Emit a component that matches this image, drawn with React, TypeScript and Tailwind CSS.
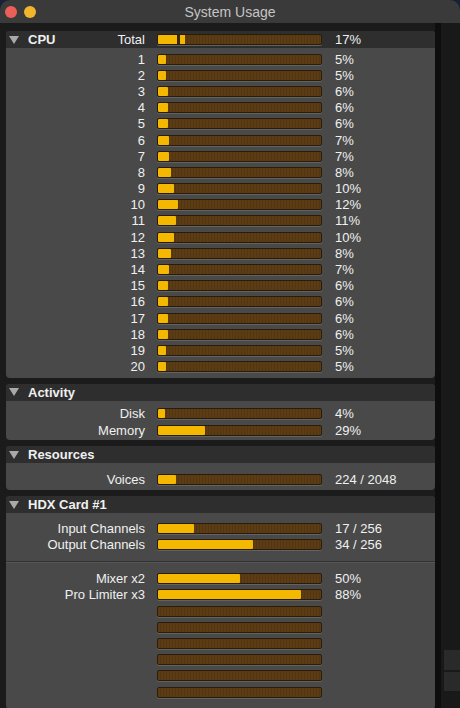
import React from "react";

const cpuRows = [5, 5, 6, 6, 6, 7, 7, 8, 10, 12, 11, 10, 8, 7, 6, 6, 6, 6, 5, 5];

function Meter({ pct, peak }: { pct?: number; peak?: boolean }) {
  return (
    <div className="relative w-[165px] h-[11px] rounded-[2px] border border-[#2a1c0a] bg-[repeating-linear-gradient(90deg,#5c3c14_0px,#5c3c14_2px,#533610_2px,#533610_3px)] shadow-[0_1px_0_#626262] overflow-hidden">
      {pct !== undefined && !peak && (
        <div className="h-full bg-[#f4b800] rounded-[1px]" style={{ width: `${pct}%` }} />
      )}
      {peak && (
        <div className="flex h-full">
          <div className="h-full w-[19px] bg-[#f4b800]" />
          <div className="h-full w-[3px] bg-[#3a260c]" />
          <div className="h-full w-[5px] bg-[#f4b800]" />
        </div>
      )}
    </div>
  );
}

function Row({ label, pct, value, peak }: { label?: string; pct?: number; value?: string; peak?: boolean }) {
  return (
    <div className="flex items-center h-[16.2px]">
      <div className="w-[139px] text-right text-[13px] leading-none text-[#f0f0f0]">{label}</div>
      <div className="ml-[12px]">
        <Meter pct={pct} peak={peak} />
      </div>
      <div className="ml-[13px] text-[13px] leading-none text-[#f0f0f0]">{value}</div>
    </div>
  );
}

function Triangle() {
  return (
    <svg width="10" height="8" viewBox="0 0 10 8" className="shrink-0">
      <path d="M0 0 H10 L5 8 Z" fill="#a9a9a9" />
    </svg>
  );
}

function Header({ title }: { title: string }) {
  return (
    <div className="flex items-center h-[17px] bg-[#2e2e2e]">
      <div className="ml-[3px]">
        <Triangle />
      </div>
      <span className="ml-[9px] text-[13px] font-bold leading-none text-[#f0f0f0]">{title}</span>
    </div>
  );
}

function Panel({ children }: { children: React.ReactNode }) {
  return <div className="rounded-[4px] bg-[#494949] overflow-hidden">{children}</div>;
}

export default function App() {
  return (
    <div className="w-[460px] h-[708px] bg-[#17223a] overflow-hidden font-['Liberation_Sans',Arial,sans-serif]">
      <div className="w-full h-full rounded-t-[10px] bg-[#1b1b1b] flex flex-col overflow-hidden">
        <div className="relative h-[23px] bg-[#3a3a3a] flex items-center justify-center shrink-0">
          <div className="absolute left-[5px] top-[6px] flex gap-[7px]">
            <div className="w-[12px] h-[12px] rounded-full bg-[#ec5f58]" />
            <div className="w-[12px] h-[12px] rounded-full bg-[#f2b62d]" />
          </div>
          <span className="text-[14px] text-[#c4c4c4] leading-none">System Usage</span>
        </div>
        <div className="flex flex-1">
          <div className="w-[435px] pl-[6px] pt-[8px] flex flex-col gap-[6px]">
            <Panel>
              <div className="flex items-center h-[17px] bg-[#2e2e2e]">
                <div className="w-[139px] flex items-center">
                  <div className="ml-[3px]">
                    <Triangle />
                  </div>
                  <span className="ml-[9px] text-[13px] font-bold leading-none text-[#f0f0f0]">CPU</span>
                  <span className="ml-auto text-[13px] leading-none text-[#f0f0f0]">Total</span>
                </div>
                <div className="ml-[12px]">
                  <Meter peak />
                </div>
                <div className="ml-[13px] text-[13px] leading-none text-[#f0f0f0]">17%</div>
              </div>
              <div className="pt-[3px] pb-[3px]">
                {cpuRows.map((p, i) => (
                  <Row key={i} label={String(i + 1)} pct={p} value={`${p}%`} />
                ))}
              </div>
            </Panel>
            <Panel>
              <Header title="Activity" />
              <div className="pt-[5px] pb-[2px]">
                <Row label="Disk" pct={4} value="4%" />
                <Row label="Memory" pct={29} value="29%" />
              </div>
            </Panel>
            <Panel>
              <Header title="Resources" />
              <div className="pt-[8px] pb-[3px]">
                <Row label="Voices" pct={11} value="224 / 2048" />
              </div>
            </Panel>
            <Panel>
              <Header title="HDX Card #1" />
              <div className="pt-[7px] pb-[8px] border-b border-[#333333]">
                <Row label="Input Channels" pct={22} value="17 / 256" />
                <Row label="Output Channels" pct={58} value="34 / 256" />
              </div>
              <div className="pt-[8px] pb-[9px] border-t border-[#575757]">
                <Row label="Mixer x2" pct={50} value="50%" />
                <Row label="Pro Limiter x3" pct={88} value="88%" />
                <Row />
                <Row />
                <Row />
                <Row />
                <Row />
                <Row />
              </div>
            </Panel>
          </div>
          <div className="w-[6px] bg-[#0e0e0e]" />
          <div className="flex-1 bg-[#191919] flex flex-col">
            <div className="mt-[627px] ml-[3px] h-[20px] bg-[#2a2a2a]" />
            <div className="mt-[2px] ml-[3px] h-[19px] bg-[#2a2a2a]" />
          </div>
        </div>
      </div>
    </div>
  );
}
